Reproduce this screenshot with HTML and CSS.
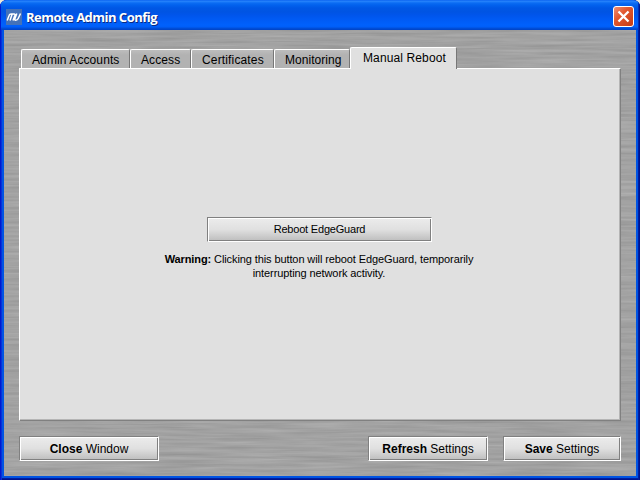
FILE: index.html
```
<!DOCTYPE html>
<html lang="en">
<head>
<meta charset="utf-8">
<title>Remote Admin Config</title>
<link rel="stylesheet" href="styles.css">
</head>
<body>
<div class="window">
  <header class="titlebar">
    <svg class="app-icon" width="16" height="16" viewBox="0 0 16 16"><rect width="16" height="16" fill="#4472b8"/><path d="M1.2 11.5L3.2 6.2Q3.6 5 5 5H8.2Q9.3 5 8.9 6.2L7 11.5M6 5.5L4 11.5M10.8 4.5L8.8 10Q8.4 11.3 9.6 11.2Q11.5 11 12.2 9.5L14.5 4.5" fill="none" stroke="#fff" stroke-width="1.5"/></svg>
    <h1 class="title">Remote Admin Config</h1>
    <button class="close" aria-label="Close"><svg width="21" height="21" viewBox="0 0 21 21"><defs><linearGradient id="red" x2="1" y2="1"><stop stop-color="#ef9278"/><stop offset=".4" stop-color="#e2572f"/><stop offset="1" stop-color="#c53a12"/></linearGradient></defs><rect x=".5" y=".5" width="20" height="20" rx="2.5" fill="url(#red)" stroke="#fff"/><path d="M5.5 5.5L15.5 15.5M15.5 5.5L5.5 15.5" stroke="#fff" stroke-width="2.3"/></svg></button>
  </header>
  <main class="content">
    <svg class="metal" width="632" height="446"><filter id="brushed" x="0" y="0" width="100%" height="100%" color-interpolation-filters="sRGB"><feTurbulence type="fractalNoise" baseFrequency=".014 .35" numOctaves="3" seed="8"/><feColorMatrix values=".13 0 0 0 .57  .13 0 0 0 .57  .13 0 0 0 .57  0 0 0 0 1"/></filter><rect width="632" height="446" filter="url(#brushed)"/></svg>
    <nav class="tabs">
      <span class="tab accounts">Admin Accounts</span>
      <span class="tab access">Access</span>
      <span class="tab certificates">Certificates</span>
      <span class="tab monitoring">Monitoring</span>
      <span class="tab reboot active">Manual Reboot</span>
    </nav>
    <section class="panel">
      <button class="button reboot-button">Reboot EdgeGuard</button>
      <p class="warning"><b>Warning:</b> Clicking this button will reboot EdgeGuard, temporarily<br>interrupting network activity.</p>
    </section>
    <footer class="actions">
      <button class="button close-window"><b>Close</b> Window</button>
      <button class="button refresh"><b>Refresh</b> Settings</button>
      <button class="button save"><b>Save</b> Settings</button>
    </footer>
  </main>
</div>
</body>
</html>
```
FILE: styles.css
```
* { box-sizing: border-box; }
body { margin: 0; background: #ece9d8; font: 12px/14px "Liberation Sans", Arial, sans-serif; color: #000; }
button { font: inherit; color: inherit; margin: 0; padding: 0; }
.window {
  width: 640px; height: 480px; padding: 0 4px 4px; overflow: hidden;
  border-radius: 7px 7px 0 0; background: #0054e3;
  box-shadow: inset 1px 0 #0019cf, inset 2px 0 #0831d9, inset -1px 0 #00138c, inset -2px 0 #001ea0, inset 0 -1px #00138c, inset 0 -2px #001ea0;
}
.titlebar {
  height: 30px; margin: 0 -4px; padding: 3px 6px 0; display: flex; align-items: center;
  background: linear-gradient(#0058ee 0, #2a85fa 1px, #1a7afa 2px, #0b6cf2 3px, #0262ee 5px, #0057e5 8px, #0054e3 12px, #0055eb 15px, #005bf5 20px, #0061fc 25px, #005ef7 27px, #0050dc 28px, #0042c4 30px);
  box-shadow: inset 1px 0 #0019cf, inset -1px 0 #00138c, inset -2px 0 #0030b8;
}
.app-icon { display: block; }
.title {
  margin: 0 0 0 4px; color: #fff; font: bold 13px/18px "Open Sans", sans-serif;
  letter-spacing: -.52px; text-shadow: 1px 1px #0b2a80; white-space: nowrap;
}
.close { width: 21px; height: 21px; margin-left: auto; border: 0; background: none; }
.close svg { display: block; }
.content { position: relative; height: 446px; padding: 17px 15px 0; background: #a2a2a2; isolation: isolate; }
.metal { position: absolute; inset: 0; z-index: -1; }
.tabs { display: flex; align-items: flex-end; height: 21px; padding-left: 2px; }
.tab {
  height: 19px; padding: 3px 0 0 10px; white-space: nowrap;
  border: solid; border-width: 1px 1px 0; border-color: #fff #777 #fff #fff; border-radius: 2px 2px 0 0;
  background: linear-gradient(#bdbdbd, #b2b2b2 5px);
}
.accounts { width: 109px; letter-spacing: .1px; }
.access { width: 61px; letter-spacing: .1px; }
.certificates { width: 83px; letter-spacing: .15px; }
.monitoring { width: 76px; letter-spacing: .05px; }
.reboot { width: 107px; letter-spacing: .12px; }
.tab.active { height: 22px; margin-bottom: -1px; padding: 3px 0 0 12px; background: #e0e0e0; position: relative; }
.panel {
  width: 602px; height: 353px; padding: 148px 0 0;
  background: #e0e0e0; border: 1px solid; border-color: #fff #808080 #808080 #fff;
  box-shadow: inset -1px -1px #b5b5b5;
}
.button {
  height: 25px; border: 1px solid; border-color: #808080 #fff #fff #808080; border-radius: 0;
  background: linear-gradient(#ececec, #e0e0e0 50%, #bdbdbd);
  box-shadow: inset 1px 1px #fff, inset -1px -1px #808080;
  white-space: nowrap;
}
.reboot-button { display: block; width: 225px; margin-left: 187px; padding-bottom: 1px; font-size: 11px; letter-spacing: -.2px; }
.warning { margin: 10px 0 0; padding-right: 2px; font-size: 11px; letter-spacing: -.1px; text-align: center; white-space: nowrap; }
.actions { display: flex; margin-top: 15px; width: 602px; }
.close-window { width: 140px; }
.refresh { width: 120px; margin-left: auto; }
.save { width: 118px; margin-left: 15px; }
```
